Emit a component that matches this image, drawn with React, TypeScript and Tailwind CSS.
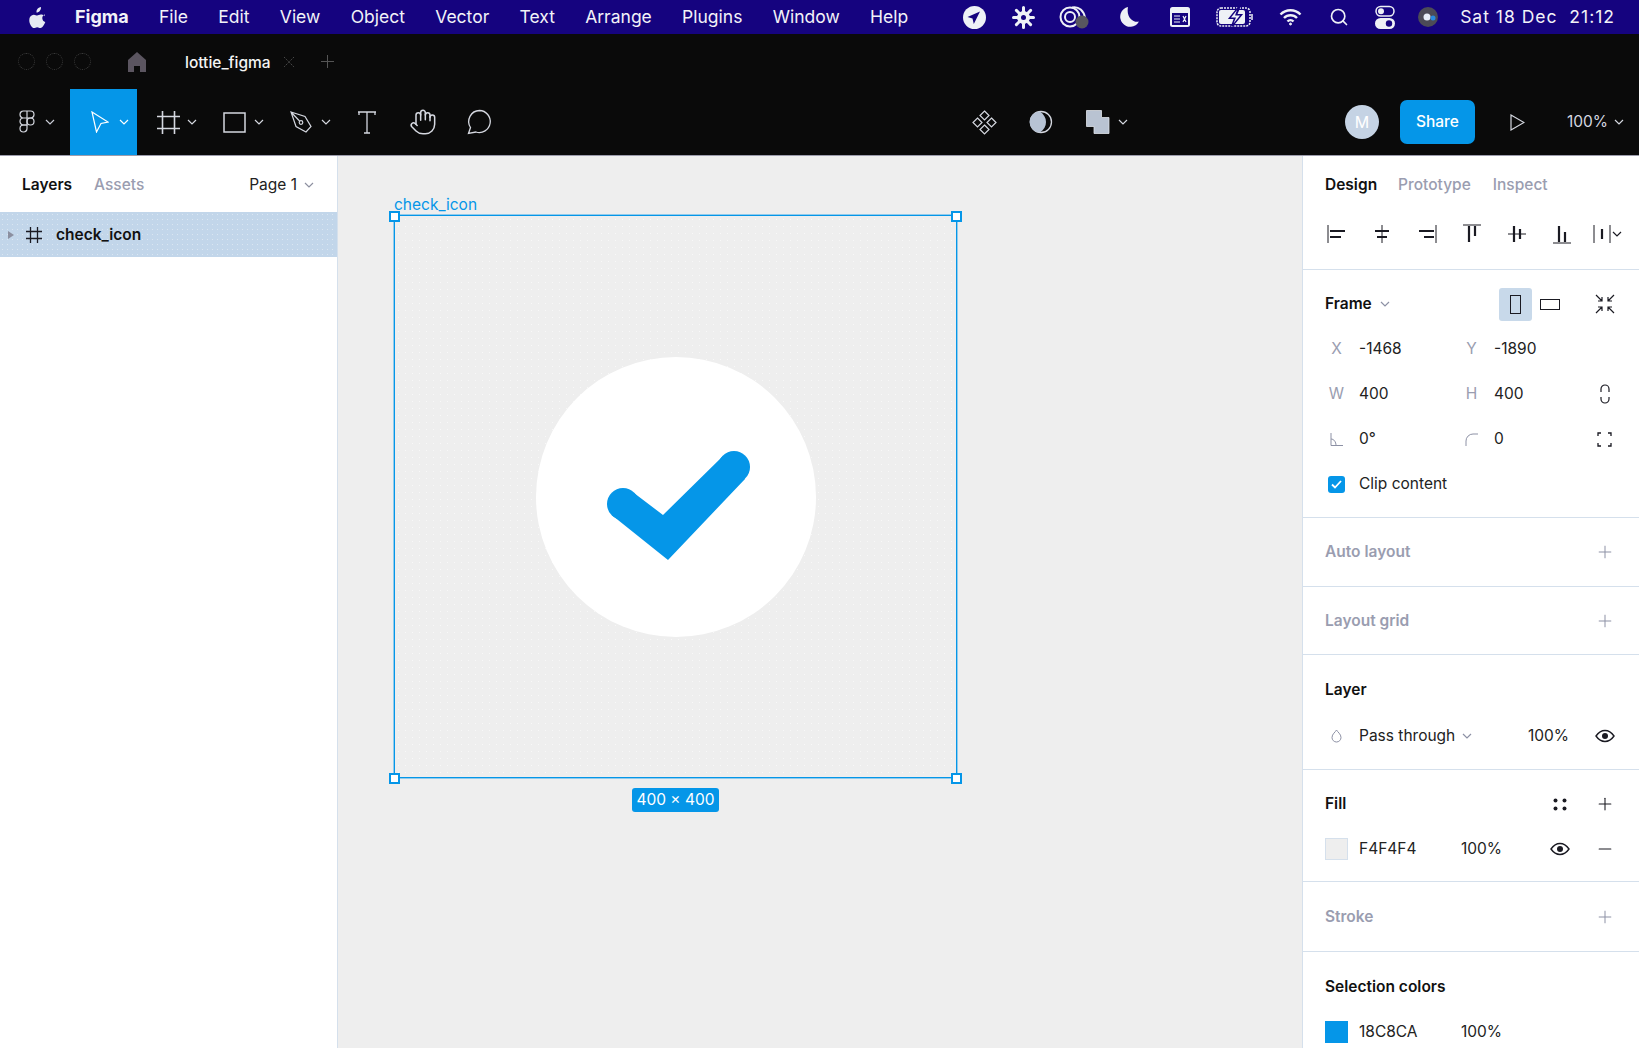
import { Hand, Minus, Plus, Search } from "lucide-react";
import type { ReactNode } from "react";

const font = "font-['Inter','Noto_Sans',sans-serif]";

const Chevron = ({ className = "text-[#c9ccd6]" }: { className?: string }) => (
  <svg width="10" height="6" viewBox="0 0 10 6" fill="none" stroke="currentColor" strokeWidth="1.2" className={className}>
    <path d="M1 1l4 4 4-4" />
  </svg>
);

const EyeIcon = ({ className }: { className?: string }) => (
  <svg width="20" height="14" viewBox="0 0 20 14" fill="none" stroke="#1a1a22" strokeWidth="1.4" className={className}>
    <path d="M1 7c2.500-3.600 5.500-5.500 9-5.500s6.500 1.900 9 5.500c-2.500 3.600-5.500 5.500-9 5.500S3.500 10.600 1 7z" />
    <circle cx="10" cy="7" r="3" fill="#1a1a22" stroke="none" />
  </svg>
);

const FigmaLogo = () => (
  <svg width="16" height="24" viewBox="0 0 16 24" fill="none" stroke="#d5d8e0" strokeWidth="1.2">
    <path d="M8 1H4.500a3.500 3.500 0 0 0 0 7H8zM8 1h3.500a3.500 3.500 0 0 1 0 7H8zM8 8H4.500a3.500 3.500 0 0 0 0 7H8z" />
    <circle cx="11.500" cy="11.500" r="3.500" />
    <path d="M8 15H4.500A3.500 3.500 0 1 0 8 18.500z" />
  </svg>
);

const MenuBar = () => (
  <div className="flex h-[34px] items-center bg-[#15037f] pl-[29px] text-[17.5px] leading-none text-[#f2f2f8]">
    <svg width="17" height="21" viewBox="0 0 17 21" fill="#e6eaf2">
      <path d="M12 0c.2 1.600-.5 3-1.300 3.900-.9 1-2.100 1.600-3.200 1.500C7.300 3.900 8 2.500 8.800 1.600 9.600.7 11 .1 12 0zM15.700 7.200c-1.700 1-2.500 2.400-2.400 4 .1 1.900 1.200 3.200 3 3.900-.4 1.200-1 2.400-1.800 3.500-.9 1.300-1.800 2.400-3.100 2.400-1.200 0-1.700-.8-3.200-.8s-2 .8-3.200.8c-1.300 0-2.300-1.200-3.200-2.600C.4 16.200-.4 12.600 1 10.100c.8-1.400 2.300-2.400 3.900-2.400 1.300 0 2.400.9 3.300.9.900 0 2.100-1 3.600-1 1.600 0 3.100.7 3.900 1.600z" />
    </svg>
    <span className="ml-[29px] w-[84px] text-[18px] font-bold">Figma</span>
    <div className="flex gap-[30.3px]">
      {["File", "Edit", "View", "Object", "Vector", "Text", "Arrange", "Plugins", "Window", "Help"].map((m) => (
        <span key={m}>{m}</span>
      ))}
    </div>
    <div className="ml-auto flex items-center pr-[24px]">
      <svg width="23" height="23" viewBox="0 0 23 23" className="mr-[26px]">
        <circle cx="11.500" cy="11.500" r="11.500" fill="#eef1f6" />
        <path d="M17 5.500L10.800 18l-1.300-5.500L4.500 11z" fill="#15037f" />
      </svg>
      <svg width="23" height="23" viewBox="0 0 23 23" className="mr-[24px]" stroke="#eef1f6" fill="#eef1f6">
        <circle cx="11.500" cy="11.500" r="6" />
        <g strokeWidth="3" strokeLinecap="round">
          <path d="M11.500 1.500v4M11.500 17.500v4M1.500 11.500h4M17.500 11.500h4M4.400 4.400l2.800 2.800M15.800 15.800l2.800 2.800M18.600 4.400l-2.800 2.800M7.200 15.800l-2.800 2.800" />
        </g>
        <circle cx="11.500" cy="11.500" r="2.500" fill="#15037f" stroke="none" />
      </svg>
      <svg width="30" height="24" viewBox="0 0 30 24" className="mr-[31px]" fill="none" stroke="#eef1f6" strokeWidth="2">
        <circle cx="11" cy="12" r="9.500" />
        <circle cx="11" cy="12" r="5" />
        <path d="M13 2.500C20 1 25 6 26 13" />
        <circle cx="23" cy="17" r="6.500" fill="#57565f" stroke="none" />
      </svg>
      <svg width="20" height="22" viewBox="0 0 20 22" className="mr-[29px]" fill="#eef1f6">
        <path d="M8 1a10 10 0 1 0 11 14.500C13 17 6 11 8 1z" />
      </svg>
      <svg width="22" height="22" viewBox="0 0 22 22" className="mr-[25px]">
        <rect x="1" y="1" width="20" height="20" rx="2.500" fill="#eef1f6" />
        <rect x="3" y="7" width="16" height="12" fill="#15037f" />
        <path d="M5 10h6M5 13h6M5 16h6M14 10l3 6M17 10l-3 6" stroke="#eef1f6" strokeWidth="1.200" />
      </svg>
      <svg width="38" height="20" viewBox="0 0 38 20" className="mr-[25px]">
        <rect x="1" y="1" width="33" height="18" rx="4" fill="none" stroke="#eef1f6" strokeWidth="1.500" strokeDasharray="2 1" />
        <rect x="3" y="3" width="26" height="14" rx="2" fill="#eef1f6" />
        <path d="M22 1l-8 10h5l-3 8 9-11h-5l3-7z" fill="#15037f" stroke="#15037f" strokeWidth="2" />
        <path d="M21 3l-6 7.500h5l-2.500 6 6.500-8h-5z" fill="#eef1f6" />
        <path d="M36 7v6" stroke="#eef1f6" strokeWidth="1.500" />
      </svg>
      <svg width="23" height="18" viewBox="0 0 23 18" className="mr-[27px]" fill="none" stroke="#eef1f6" strokeWidth="2.400">
        <path d="M1.500 6.500a14 14 0 0 1 20 0M5 10a9 9 0 0 1 13 0M8.500 13.500a4 4 0 0 1 6 0" />
        <circle cx="11.500" cy="16" r="1" fill="#eef1f6" strokeWidth="1" />
      </svg>
      <Search size={20} color="#eef1f6" strokeWidth={2} className="mr-[26px]" />
      <svg width="20" height="24" viewBox="0 0 20 24" className="mr-[22px]">
        <rect x="1" y="1.500" width="18" height="9.500" rx="4.700" fill="none" stroke="#eef1f6" strokeWidth="1.500" />
        <circle cx="6" cy="6.200" r="3" fill="#eef1f6" />
        <rect x="0" y="13" width="20" height="11" rx="5.500" fill="#eef1f6" />
        <circle cx="14" cy="18.500" r="3.200" fill="#15037f" />
      </svg>
      <svg width="22" height="26" viewBox="0 0 22 26" className="mr-[21px]">
        <circle cx="11" cy="13" r="10" fill="#4c4b57" />
        <circle cx="10" cy="13" r="3.500" fill="#e8eef8" />
        <circle cx="16" cy="14" r="2.500" fill="#2a8ae0" />
      </svg>
      <span className="whitespace-nowrap tracking-[1px]">Sat 18 Dec&nbsp; 21:12</span>
    </div>
  </div>
);

const TabBar = () => (
  <div className="flex h-[55px] items-center bg-[#0a0a0a] pl-[18px]">
    <div className="flex gap-[11px]">
      {[0, 1, 2].map((i) => (
        <div key={i} className="h-[17px] w-[17px] rounded-full border border-dotted border-[#3c3c3c]" />
      ))}
    </div>
    <svg width="18" height="20" viewBox="0 0 18 20" fill="#5b5560" className="ml-[37px]">
      <path d="M9 0l9 8v12h-6v-6H6v6H0V8z" />
    </svg>
    <span className="ml-[39px] pt-[2px] text-[15.5px] font-medium text-[#f4f4f4]">lottie_figma</span>
    <svg width="12" height="12" viewBox="0 0 12 12" stroke="#4a4a4a" strokeDasharray="1.500 1" className="ml-[12px]">
      <path d="M1 1l10 10M11 1L1 11" />
    </svg>
    <svg width="13" height="13" viewBox="0 0 13 13" stroke="#555" className="ml-[26px]">
      <path d="M6.500 0v13M0 6.500h13" />
    </svg>
  </div>
);

const ToolBar = () => (
  <div className="flex h-[67px] items-center border-b border-[#9c9cac] bg-[#0a0a0a] text-[#d5d8e0]">
    <div className="flex w-[70px] items-center pl-[19px]">
      <FigmaLogo />
      <Chevron className="ml-[10px] text-[#c9ccd6]" />
    </div>
    <div className="flex h-[66px] w-[67px] items-center bg-[#0596e8] pl-[21px]">
      <svg width="18" height="22" viewBox="0 0 18 22" fill="none" stroke="#fff" strokeWidth="1.200">
        <path d="M1 1l16 10-7 1.500L5.500 21z" />
      </svg>
      <Chevron className="ml-[10px] text-white" />
    </div>
    <div className="ml-[20px] flex items-center">
      <svg width="23" height="23" viewBox="0 0 23 23" stroke="#d5d8e0" strokeWidth="1.600">
        <path d="M5.500 0v23M17.500 0v23M0 5.500h23M0 17.500h23" />
      </svg>
      <Chevron className="ml-[7px]" />
    </div>
    <div className="ml-[26px] flex items-center">
      <svg width="23" height="21" viewBox="0 0 23 21" fill="none" stroke="#d5d8e0" strokeWidth="1.500">
        <rect x="1" y="1" width="21" height="19" />
      </svg>
      <Chevron className="ml-[8px]" />
    </div>
    <div className="ml-[26px] flex items-center">
      <svg width="23" height="23" viewBox="0 0 23 23" fill="none" stroke="#d5d8e0" strokeWidth="1.200">
        <path d="M1 1l14 4.500 6 10-5 5.500-10-5.500zM1 1l8.500 9" />
        <circle cx="11" cy="11.500" r="1.800" />
      </svg>
      <Chevron className="ml-[8px]" />
    </div>
    <svg width="18" height="23" viewBox="0 0 18 23" fill="none" stroke="#d5d8e0" strokeWidth="1.300" className="ml-[27px]">
      <path d="M0 1h18M9 1v21M6 22h6M1 1v3M17 1v3" />
    </svg>
    <Hand size={28} color="#d5d8e0" strokeWidth={1.300} className="ml-[33px]" />
    <svg width="26" height="26" viewBox="0 0 26 26" fill="none" stroke="#d5d8e0" strokeWidth="1.300" className="ml-[29px]">
      <path d="M13.500 1.500a11 11 0 1 1-3.500 21.500l-7.500 1.500 2-6A11 11 0 0 1 13.500 1.500z" />
    </svg>

    <svg width="25" height="25" viewBox="0 0 25 25" fill="none" stroke="#d5d8e0" strokeWidth="1.200" className="ml-[480px]">
      <path d="M12.500 1l4.500 4.500-4.500 4.500L8 5.500zM12.500 15l4.500 4.500-4.500 4.500L8 19.500zM5.500 8l4.500 4.500L5.500 17 1 12.500zM19.500 8l4.500 4.500-4.500 4.500-4.500-4.500z" />
    </svg>
    <svg width="24" height="24" viewBox="0 0 24 24" className="ml-[32px]">
      <circle cx="12" cy="12" r="10.500" fill="none" stroke="#d5d8e0" strokeWidth="1.300" />
      <path d="M11 1.500a10.500 10.500 0 0 0 0 21c4-3 6-6.500 6-10.500S15 4.500 11 1.500z" fill="#b7c3d4" />
    </svg>
    <svg width="24" height="24" viewBox="0 0 24 24" fill="#b9c3d2" stroke="#dfe3ea" strokeWidth="0.800" className="ml-[33px]">
      <path d="M0.500 0.500h15v7h7.500v16H8v-7H0.500z" />
    </svg>
    <Chevron className="ml-[8px]" />

    <div className="ml-auto flex items-center pr-[15px]">
      <div className="flex h-[34px] w-[34px] items-center justify-center rounded-full bg-[#c5d3e4] text-[16px] text-white">M</div>
      <div className="ml-[21px] flex h-[44px] w-[75px] items-center justify-center rounded-[7px] bg-[#0596e8] text-[15.5px] font-medium text-white">Share</div>
      <svg width="15" height="17" viewBox="0 0 15 17" fill="none" stroke="#d5d8e0" strokeWidth="1.200" className="ml-[35px]">
        <path d="M1 1l13 7.500L1 16z" />
      </svg>
      <span className="ml-[42px] text-[15.5px] text-[#d5d8e0]">100%</span>
      <Chevron className="ml-[6px]" />
    </div>
  </div>
);

const LeftPanel = () => (
  <div className="flex w-[338px] shrink-0 flex-col border-r border-[#d5e0ec] bg-white text-[15.5px]">
    <div className="flex h-[56px] items-center pl-[22px] pr-[23px] pt-[2px]">
      <span className="font-semibold text-[#111]">Layers</span>
      <span className="ml-[22px] font-medium text-[#9a9db0]">Assets</span>
      <span className="ml-auto text-[#222]">Page 1</span>
      <Chevron className="ml-[7px] text-[#8d90a0]" />
    </div>
    <div className="flex h-[45px] items-center bg-[#c2d6ea] bg-[radial-gradient(#dbe6f1_0.7px,transparent_0.8px)] bg-[length:5px_5px] pl-[8px]">
      <svg width="6" height="8" viewBox="0 0 6 8" fill="#8b8fa0">
        <path d="M0 0l6 4-6 4z" />
      </svg>
      <svg width="16" height="16" viewBox="0 0 16 16" stroke="#1a1a22" strokeWidth="1.300" className="ml-[12px]">
        <path d="M4.500 0v16M11.500 0v16M0 4.500h16M0 11.500h16" />
      </svg>
      <span className="ml-[14px] pt-[1px] font-semibold text-[#111]">check_icon</span>
    </div>
  </div>
);

const Canvas = () => (
  <div className="relative flex-1 bg-[#eeeeee]">
    <span className="absolute left-[56px] top-[39px] text-[15.5px] leading-5 text-[#0596e8]">check_icon</span>
    <div className="absolute left-[56px] top-[59px] flex h-[563px] w-[563px] items-center justify-center border border-[#0596e8] bg-[#eeeeee] bg-[radial-gradient(#f8f8f8_0.7px,transparent_0.8px)] bg-[length:7px_7px] ring-1 ring-[#0596e8]/40">
      <div className="flex h-[280px] w-[280px] items-center justify-center rounded-full bg-white">
        <svg width="280" height="280" viewBox="0 0 280 280" fill="#0596e8">
          <circle cx="87" cy="147" r="16" />
          <circle cx="198" cy="110" r="16" />
          <path d="M98 136L127 158 187 99 209 122 132 203 77 159z" />
        </svg>
      </div>
    </div>
    {[
      "left-[51px] top-[55px]",
      "left-[613px] top-[55px]",
      "left-[51px] top-[617px]",
      "left-[613px] top-[617px]",
    ].map((pos) => (
      <div key={pos} className={`absolute h-[11px] w-[11px] border-2 border-[#0596e8] bg-white ${pos}`} />
    ))}
    <div className="absolute left-[294px] top-[632px] flex h-[24px] w-[87px] items-center justify-center rounded-[3px] bg-[#0596e8] text-[15.5px] text-white">
      400 × 400
    </div>
  </div>
);

const Section = ({ h, children, last }: { h: string; children: ReactNode; last?: boolean }) => (
  <div className={`${h} shrink-0 pl-[22px] pr-[24px] ${last ? "" : "border-b border-[#d5e0ec]"}`}>{children}</div>
);

const AddRow = ({ title }: { title: string }) => (
  <div className="flex h-full items-center">
    <span className="font-semibold text-[#9a9db0]">{title}</span>
    <Plus size={20} strokeWidth={1.200} color="#8d91a5" className="ml-auto" />
  </div>
);

const Prop = ({ label, value, w }: { label: ReactNode; value: string; w: string }) => (
  <div className={`flex items-center ${w}`}>
    <span className="flex w-[23px] justify-center text-[#9a9db0]">{label}</span>
    <span className="ml-[11px] text-[#222]">{value}</span>
  </div>
);

const AlignIcon = ({ axis, bars }: { axis: string; bars: string }) => (
  <svg width="20" height="20" viewBox="0 0 20 20" fill="none" stroke="#1a1a22" className="shrink-0">
    <path d={axis} strokeWidth="1" />
    <path d={bars} strokeWidth="2.200" />
  </svg>
);

const RightPanel = () => (
  <div className="flex h-full w-[337px] shrink-0 flex-col overflow-hidden border-l border-[#d5e0ec] bg-white text-[15.5px]">
    <Section h="h-[114px]">
      <div className="flex h-[57px] items-center">
        <span className="font-semibold text-[#111]">Design</span>
        <span className="ml-[21px] font-medium text-[#9a9db0]">Prototype</span>
        <span className="ml-[22px] font-medium text-[#9a9db0]">Inspect</span>
      </div>
      <div className="ml-[2px] mt-[11px] flex items-center gap-[25px]">
        <AlignIcon axis="M1 1v18" bars="M3 7h15M3 13h11" />
        <AlignIcon axis="M10 1v18" bars="M3 7h14M5 13h10" />
        <AlignIcon axis="M19 1v18" bars="M2 7h15M7 13h10" />
        <AlignIcon axis="M1 1h18" bars="M7 2v16M13 2v10" />
        <AlignIcon axis="M1 10h18" bars="M7 2v16M13 5v10" />
        <AlignIcon axis="M1 19h18" bars="M7 2v16M13 8v10" />
        <div className="-ml-[4px] flex shrink-0 items-center">
          <AlignIcon axis="M1 1v18M17 1v18" bars="M9 5v10" />
          <Chevron className="-ml-[1px] text-[#1a1a22]" />
        </div>
      </div>
    </Section>
    <Section h="h-[248px]">
      <div className="flex flex-col gap-[23px] pt-[23px]">
        <div className="flex h-[22px] items-center">
          <span className="font-semibold text-[#111]">Frame</span>
          <Chevron className="ml-[8px] text-[#8d91a5]" />
          <div className="ml-auto flex h-[33px] w-[33px] items-center justify-center rounded-[3px] bg-[#c8d9ea]">
            <div className="h-[19px] w-[11px] border border-[#1a1a22]" />
          </div>
          <div className="ml-[1px] mr-[29px] flex h-[33px] w-[33px] items-center justify-center">
            <div className="h-[11px] w-[20px] border border-[#1a1a22]" />
          </div>
          <svg width="20" height="20" viewBox="0 0 20 20" fill="none" stroke="#1a1a22" strokeWidth="1.200">
            <path d="M1 1l6 6M3 7h4V3M19 1l-6 6M17 7h-4V3M1 19l6-6M3 13h4v4M19 19l-6-6M17 13h-4v4" />
          </svg>
        </div>
        <div className="flex h-[22px] items-center">
          <Prop label="X" value="-1468" w="w-[135px]" />
          <Prop label="Y" value="-1890" w="w-[108px]" />
        </div>
        <div className="flex h-[22px] items-center">
          <Prop label="W" value="400" w="w-[135px]" />
          <Prop label="H" value="400" w="w-[108px]" />
          <svg width="10" height="20" viewBox="0 0 10 20" fill="none" stroke="#1a1a22" strokeWidth="1.200" className="ml-auto mr-[5px]">
            <path d="M1 8V5a4 4 0 0 1 8 0v3M1 13v2a4 4 0 0 0 8 0v-2" />
          </svg>
        </div>
        <div className="flex h-[22px] items-center">
          <Prop
            label={
              <svg width="13" height="13" viewBox="0 0 13 13" fill="none" stroke="#8d91a5">
                <path d="M1 0v12.500h12M1 6c3 0 5 3 5 6.500" />
              </svg>
            }
            value="0°"
            w="w-[135px]"
          />
          <Prop
            label={
              <svg width="13" height="13" viewBox="0 0 13 13" fill="none" stroke="#8d91a5">
                <path d="M1 13V8a7 7 0 0 1 7-7h5" />
              </svg>
            }
            value="0"
            w="w-[108px]"
          />
          <svg width="15" height="15" viewBox="0 0 15 15" fill="none" stroke="#1a1a22" strokeWidth="1.300" className="ml-auto mr-[3px]">
            <path d="M1 4V1h3M11 1h3v3M14 11v3h-3M4 14H1v-3" />
          </svg>
        </div>
        <div className="flex h-[22px] items-center">
          <span className="flex w-[23px] justify-center">
            <span className="flex h-[17px] w-[17px] items-center justify-center rounded-[3px] bg-[#0596e8]">
              <svg width="11" height="9" viewBox="0 0 11 9" fill="none" stroke="#fff" strokeWidth="1.800">
                <path d="M1 4.500l3 3L10 1" />
              </svg>
            </span>
          </span>
          <span className="ml-[11px] text-[#222]">Clip content</span>
        </div>
      </div>
    </Section>
    <Section h="h-[69px]">
      <AddRow title="Auto layout" />
    </Section>
    <Section h="h-[68px]">
      <AddRow title="Layout grid" />
    </Section>
    <Section h="h-[115px]">
      <div className="flex h-[70px] items-center font-semibold text-[#111]">Layer</div>
      <div className="flex h-[22px] items-center">
        <span className="flex w-[23px] justify-center">
          <svg width="11" height="14" viewBox="0 0 11 14" fill="none" stroke="#8d91a5">
            <path d="M5.500 1c1 2 4.500 4 4.500 7.500a4.500 4.500 0 0 1-9 0C1 5 4.500 3 5.500 1z" />
          </svg>
        </span>
        <span className="ml-[11px] text-[#222]">Pass through</span>
        <Chevron className="ml-[7px] text-[#8d91a5]" />
        <span className="ml-auto text-[#222]">100%</span>
        <EyeIcon className="ml-[26px]" />
      </div>
    </Section>
    <Section h="h-[112px]">
      <div className="flex h-[68px] items-center font-semibold text-[#111]">
        Fill
        <svg width="14" height="13" viewBox="0 0 14 13" fill="#1a1a22" className="ml-auto mr-[28px]">
          <circle cx="2.500" cy="2.500" r="2" />
          <circle cx="11.500" cy="2.500" r="2" />
          <circle cx="2.500" cy="10.500" r="2" />
          <circle cx="11.500" cy="10.500" r="2" />
        </svg>
        <Plus size={20} strokeWidth={1.300} color="#1a1a22" />
      </div>
      <div className="flex h-[22px] items-center">
        <span className="h-[22px] w-[23px] border border-[#d5e0ec] bg-[#eeeeee]" />
        <span className="ml-[11px] w-[102px] text-[#222]">F4F4F4</span>
        <span className="text-[#222]">100%</span>
        <EyeIcon className="ml-auto mr-[25px]" />
        <Minus size={20} strokeWidth={1.300} color="#1a1a22" />
      </div>
    </Section>
    <Section h="h-[70px]">
      <AddRow title="Stroke" />
    </Section>
    <Section h="h-[97px]" last>
      <div className="flex h-[69px] items-center font-semibold text-[#111]">Selection colors</div>
      <div className="flex h-[22px] items-center">
        <span className="h-[22px] w-[23px] bg-[#0596e8]" />
        <span className="ml-[11px] w-[102px] text-[#222]">18C8CA</span>
        <span className="text-[#222]">100%</span>
      </div>
    </Section>
  </div>
);

export default function App() {
  return (
    <div className={`flex h-[1048px] w-[1639px] flex-col overflow-hidden ${font}`}>
      <MenuBar />
      <TabBar />
      <ToolBar />
      <div className="flex min-h-0 flex-1">
        <LeftPanel />
        <Canvas />
        <RightPanel />
      </div>
    </div>
  );
}
